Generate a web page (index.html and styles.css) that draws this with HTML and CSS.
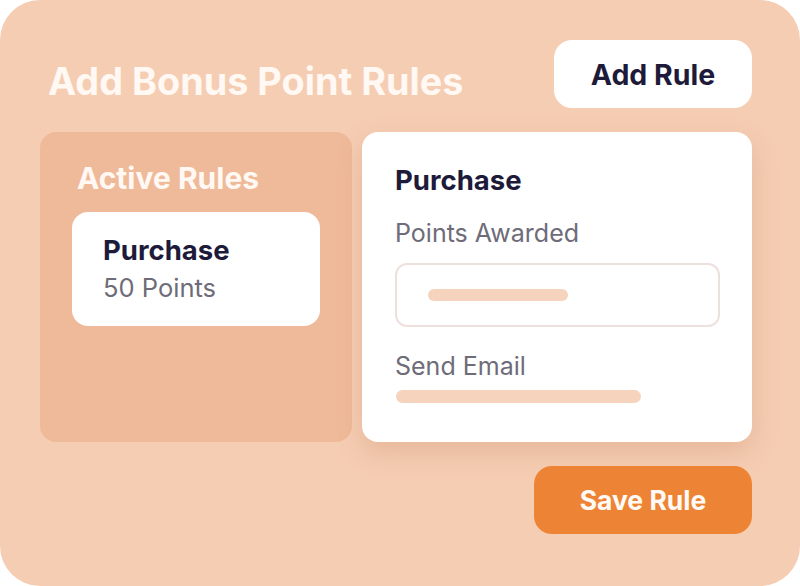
FILE: index.html
```html
<!DOCTYPE html>
<html>
<head>
<meta charset="utf-8">
<link rel="stylesheet" href="styles.css">
</head>
<body>
<div class="panel">
  <div class="header">
    <h1 class="title">Add Bonus Point Rules</h1>
    <div class="btn btn-light">Add Rule</div>
  </div>
  <div class="main">
    <div class="rules">
      <h2 class="rules-title">Active Rules</h2>
      <div class="rule-card">
        <div class="card-title">Purchase</div>
        <div class="rule-points">50 Points</div>
      </div>
    </div>
    <div class="editor">
      <div class="card-title">Purchase</div>
      <div class="label label-first">Points Awarded</div>
      <div class="input"><span class="bar bar-short"></span></div>
      <div class="label label-second">Send Email</div>
      <span class="bar bar-long"></span>
    </div>
  </div>
  <div class="footer">
    <div class="btn btn-orange">Save Rule</div>
  </div>
</div>
</body>
</html>
```

FILE: styles.css
```css
html, body {
  margin: 0;
  padding: 0;
  background: #ffffff;
}
body {
  font-family: "Inter", "Open Sans", sans-serif;
}
.panel {
  width: 800px;
  height: 586px;
  box-sizing: border-box;
  background: #f5cdb3;
  border-radius: 40px;
  padding: 40px 48px 0 40px;
}
.header {
  display: flex;
  justify-content: space-between;
  align-items: center;
  height: 68px;
}
.title {
  margin: 14px 0 0 8px;
  font-size: 37.8px;
  line-height: 44px;
  font-weight: 700;
  color: #fff8f3;
}
.btn {
  display: flex;
  align-items: center;
  justify-content: center;
  height: 68px;
  border-radius: 18px;
  font-weight: 700;
}
.btn-light {
  width: 198px;
  background: #ffffff;
  color: #1e1b3a;
  font-size: 28.5px;
}
.btn-orange {
  width: 218px;
  background: #ed8435;
  color: #fffaf6;
  font-size: 26.5px;
}
.main {
  display: flex;
  gap: 10px;
  margin-top: 24px;
  height: 310px;
}
.rules {
  width: 312px;
  box-sizing: border-box;
  background: #efba9a;
  border-radius: 16px;
  padding: 28px 32px 0 32px;
}
.rules-title {
  margin: 0 0 0 5px;
  font-size: 30px;
  font-weight: 700;
  color: #fff8f3;
  line-height: 36px;
}
.rule-card {
  margin-top: 16px;
  width: 248px;
  height: 114px;
  box-sizing: border-box;
  background: #ffffff;
  border-radius: 16px;
  padding: 20px 31px 0 31px;
}
.card-title {
  font-size: 27.5px;
  font-weight: 700;
  color: #1e1b3a;
  line-height: 36px;
}
.rule-points {
  margin-top: 4px;
  font-size: 25.5px;
  color: #6e6c78;
  line-height: 32px;
}
.editor {
  width: 390px;
  box-sizing: border-box;
  background: #ffffff;
  border-radius: 16px;
  padding: 30px 32px 0 33px;
  box-shadow: 0 10px 24px rgba(190, 120, 80, 0.25);
  display: flex;
  flex-direction: column;
  align-items: flex-start;
}
.label {
  font-size: 25px;
  color: #6e6c78;
  line-height: 32px;
}
.label-first {
  margin-top: 19px;
}
.label-second {
  margin-top: 23px;
}
.input {
  margin-top: 14px;
  width: 325px;
  height: 64px;
  box-sizing: border-box;
  border: 2px solid #eee0dc;
  border-radius: 12px;
  display: flex;
  align-items: center;
  padding-left: 31px;
}
.bar {
  display: block;
  background: #f5d3bd;
  border-radius: 8px;
}
.bar-short {
  width: 140px;
  height: 12px;
}
.bar-long {
  margin-top: 8px;
  margin-left: 1px;
  width: 245px;
  height: 13px;
}
.footer {
  display: flex;
  justify-content: flex-end;
  margin-top: 24px;
}
```
